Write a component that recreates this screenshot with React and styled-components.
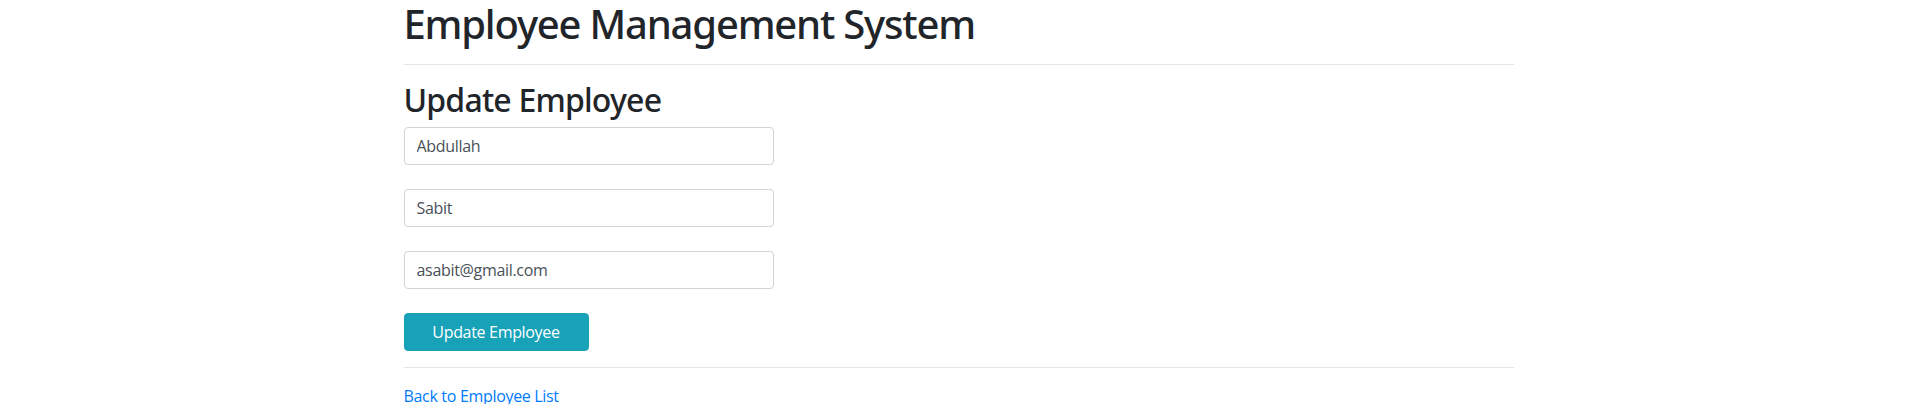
import React from "react";
import styled, { createGlobalStyle } from "styled-components";

const GlobalStyle = createGlobalStyle`
  html, body { margin: 0; padding: 0; background: #fff; }
  body {
    font-family: "Open Sans", "Noto Sans", sans-serif;
    font-size: 16px;
    line-height: 1.5;
    letter-spacing: -0.02em;
    color: #212529;
  }
  * { box-sizing: border-box; }
`;

const Container = styled.div`
  width: 1140px;
  margin: 0 auto;
  padding: 0 15px;
`;

const Title = styled.h1`
  margin: 0 0 14px;
  font-family: "Noto Sans", "Open Sans", sans-serif;
  font-size: 40px;
  font-weight: 500;
  line-height: 1.2;
  letter-spacing: -0.03em;
`;

const Rule = styled.hr`
  margin: 16px 0;
  border: 0;
  border-top: 1px solid rgba(0, 0, 0, 0.1);
`;

const SubTitle = styled.h2`
  margin: 0 0 8px;
  font-family: "Noto Sans", "Open Sans", sans-serif;
  font-size: 32px;
  font-weight: 500;
  line-height: 1.2;
  letter-spacing: -0.025em;
`;

const Form = styled.form`
  display: flex;
  flex-direction: column;
  align-items: flex-start;
  gap: 24px;
`;

const Input = styled.input`
  display: block;
  width: 370px;
  height: 38px;
  padding: 6px 12px;
  font-family: inherit;
  font-size: 16px;
  line-height: 1.5;
  letter-spacing: inherit;
  color: #495057;
  background: #fff;
  border: 1px solid #ced4da;
  border-radius: 4px;
  outline: none;
`;

const Button = styled.button`
  width: 185px;
  height: 38px;
  padding: 6px 12px;
  font-family: inherit;
  font-size: 16px;
  line-height: 1.5;
  letter-spacing: inherit;
  color: #fff;
  background: #17a2b8;
  border: 1px solid #17a2b8;
  border-radius: 4px;
  cursor: pointer;
`;

const Link = styled.a`
  color: #007bff;
  text-decoration: none;
`;

export default function App() {
  return (
    <>
      <GlobalStyle />
      <Container>
        <Title>Employee Management System</Title>
        <Rule />
        <SubTitle>Update Employee</SubTitle>
        <Form onSubmit={(e) => e.preventDefault()}>
          <Input type="text" defaultValue="Abdullah" />
          <Input type="text" defaultValue="Sabit" />
          <Input type="email" defaultValue="asabit@gmail.com" />
          <Button type="submit">Update Employee</Button>
        </Form>
        <Rule />
        <Link href="#">Back to Employee List</Link>
      </Container>
    </>
  );
}
